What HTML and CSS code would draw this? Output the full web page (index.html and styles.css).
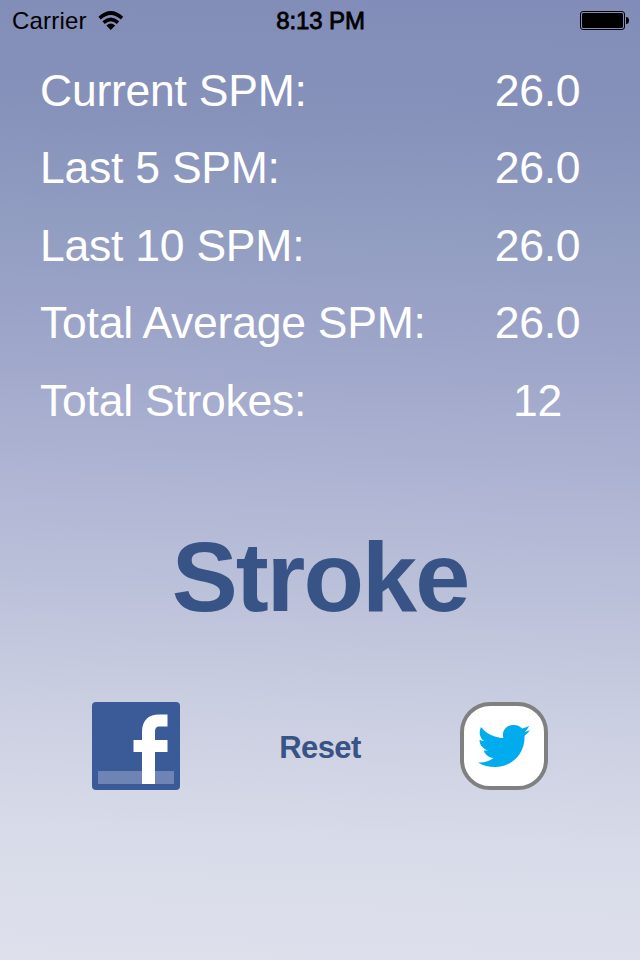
FILE: index.html
```html
<!DOCTYPE html>
<html lang="en">
<head>
<meta charset="utf-8">
<title>Stroke</title>
<link rel="stylesheet" href="styles.css">
</head>
<body>
<main class="screen">
  <header class="status">
    <div class="network"><span class="carrier">Carrier</span>
      <svg class="wifi" width="26" height="20" viewBox="0 0 26 20"><g fill="none" stroke="#000" stroke-width="3.600"><path d="M1.600 7.100Q12.800-3.100 24 7.100"/><path d="M5.600 11.600Q12.800 5.200 20 11.600"/></g><path d="M8.400 14.500Q12.800 10.700 17.200 14.500L12.800 19Z"/></svg>
    </div>
    <div class="time">8:13 PM</div>
    <svg class="battery" width="49" height="19" viewBox="0 0 49 19"><rect x=".5" y=".5" width="44" height="18" rx="2.5" fill="none" stroke="#000"/><rect x="2" y="2" width="41" height="15" rx="1.5"/><path d="M46 6Q49 6 49 9.500T46 13Z"/></svg>
  </header>
  <dl class="stats">
    <div class="row"><dt>Current SPM:</dt><dd>26.0</dd></div>
    <div class="row"><dt>Last 5 SPM:</dt><dd>26.0</dd></div>
    <div class="row"><dt>Last 10 SPM:</dt><dd>26.0</dd></div>
    <div class="row"><dt>Total Average SPM:</dt><dd>26.0</dd></div>
    <div class="row"><dt>Total Strokes:</dt><dd>12</dd></div>
  </dl>
  <button class="stroke">Stroke</button>
  <div class="actions">
    <button class="social" aria-label="Facebook"><svg width="88" height="88" viewBox="0 0 88 88"><rect width="88" height="88" rx="4" fill="#3b5b98"/><path fill="#6d84b4" d="M6 69H82V82H6Z"/><path fill="#fff" d="M50 82V50H41.500V38H50V30C50 18 57 12.500 67 12.500H75.500V24.500H68C64 24.500 63 26.500 63 30V38H75.500V50H63V82Z"/></svg></button>
    <button class="reset">Reset</button>
    <button class="social" aria-label="Twitter"><svg width="88" height="88" viewBox="0 0 88 88"><rect x="2" y="2" width="84" height="84" rx="28" fill="#fff" stroke="#808080" stroke-width="4"/><path fill="#00aced" d="M21 25C26 31.500 34 35.500 43.300 36C41.500 28 47 23 54 23C57.500 23 60 24.400 62 26.500C64.500 26 67 25 69 23.700C68 26.500 66.500 28.500 64.500 29.700C67 29.400 68.500 28.800 70 28.200C68.500 30.500 66.500 32 64.600 33.800C65 53 51 65 35 65C28.500 65 22.800 63.300 18 60.400C24 61 29 59.300 33.500 56C28.500 55.700 25 52.500 23.800 48.600H28.300C23 47 19.500 43 19.500 38L24.200 39.200C19.500 36 18.500 30 21 25Z"/></svg></button>
  </div>
</main>
</body>
</html>
```
FILE: styles.css
```css
* { box-sizing: border-box; }
body { margin: 0; font-family: "Liberation Sans", Arial, sans-serif; }
.screen {
  width: 640px;
  height: 960px;
  overflow: hidden;
  background: linear-gradient(182deg, #818cb8 0%, #8792bb 13%, #929dc2 25%, #9da5c9 36%, #adb3d2 49%, #babfd9 60%, #cacee1 73%, #d7dae8 86%, #dee1ec 100%);
}
.status {
  display: grid;
  grid-template-columns: 1fr auto 1fr;
  align-items: center;
  height: 41px;
  padding: 0 11px 0 12px;
  font-size: 24px;
}
.network { display: flex; align-items: center; gap: 11px; }
.carrier { letter-spacing: 0.2px; }
.time { -webkit-text-stroke: 0.8px #000; letter-spacing: -0.1px; }
.battery { justify-self: end; }
.stats { margin: 11px 0 0; padding: 0 20px 0 40px; }
.row {
  display: grid;
  grid-template-columns: 1fr 165px;
  align-items: center;
  height: 77.5px;
  color: #fff;
  font-size: 44.5px;
  letter-spacing: -0.24px;
  white-space: nowrap;
}
dd { margin: 0; text-align: center; }
button { margin: 0; padding: 0; border: 0; background: none; font: inherit; color: #385487; }
.stroke {
  display: block;
  width: 640px;
  height: 110px;
  margin-top: 82px;
  font-size: 99px;
  font-weight: bold;
  line-height: 110px;
  letter-spacing: -1.9px;
}
.actions {
  display: flex;
  align-items: center;
  justify-content: space-between;
  margin-top: 70px;
  padding: 0 92px;
}
.social, .social svg { display: block; width: 88px; height: 88px; }
.reset { padding-top: 5px; font-size: 31px; font-weight: bold; letter-spacing: -0.6px; }
```
